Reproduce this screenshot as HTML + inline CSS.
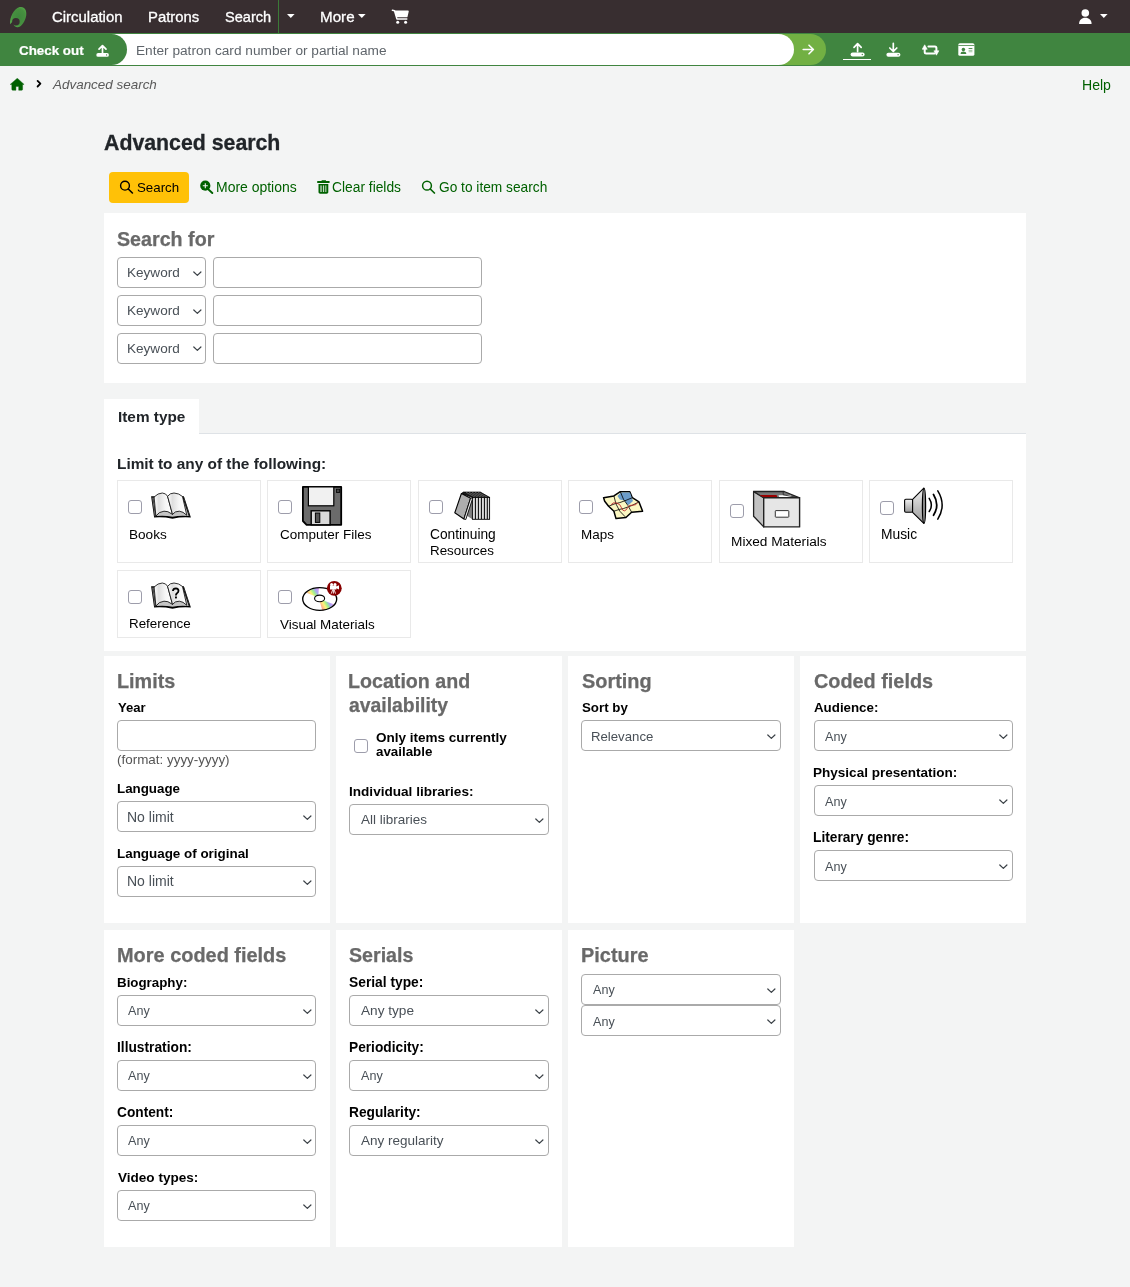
<!DOCTYPE html>
<html><head><meta charset="utf-8"><title>Advanced search</title>
<style>
html,body{margin:0;padding:0}
body{width:1130px;height:1287px;overflow:hidden;position:relative;background:#f3f4f4;font-family:"Liberation Sans",sans-serif;}
.t{position:absolute;white-space:nowrap;will-change:transform}
.b{position:absolute;display:block}
</style></head><body>
<div class="b" style="left:0px;top:0px;width:1130px;height:33px;background:#382e30"></div>
<svg class="b" style="left:0px;top:0px" width="34" height="33" viewBox="0 0 34 33"><defs><radialGradient id="lg" cx="0.55" cy="0.5" r="0.6"><stop offset="0" stop-color="#3f873d"/><stop offset="0.65" stop-color="#46903f"/><stop offset="1" stop-color="#5aae4c"/></radialGradient></defs>
<path d="M10.1 24.2 C9.6 17.5 13.6 8.8 19.6 7.1 C24.3 5.9 27 10.2 26.2 15.4 C25.3 21.4 21.4 27.1 17.6 27.2 C15.9 27.3 14.5 26.4 13.9 25.3 L12.6 21.5 Z" fill="url(#lg)"/>
<circle cx="15.9" cy="21.8" r="3.75" fill="#382e30"/></svg>
<div class="t" style="left:52.30px;top:7px;font-size:14.932px;line-height:19px;font-weight:400;color:#fff;font-style:normal;-webkit-text-stroke:0.3px #fff">Circulation</div>
<div class="t" style="left:148.04px;top:8px;font-size:14.864px;line-height:19px;font-weight:400;color:#fff;font-style:normal;-webkit-text-stroke:0.3px #fff">Patrons</div>
<div class="t" style="left:225.04px;top:8px;font-size:14.573px;line-height:18px;font-weight:400;color:#fff;font-style:normal;-webkit-text-stroke:0.3px #fff">Search</div>
<div class="b" style="left:278px;top:0px;width:1px;height:33px;background:#3b7a37"></div>
<svg class="b" style="left:287px;top:14px" width="8" height="5" viewBox="0 0 8 5"><path d="M0 0 L7.6 0 L3.8 4.1 Z" fill="#fff"/></svg>
<div class="t" style="left:319.81px;top:7px;font-size:15.188px;line-height:19px;font-weight:400;color:#fff;font-style:normal;-webkit-text-stroke:0.3px #fff">More</div>
<svg class="b" style="left:358.3px;top:14px" width="8" height="5" viewBox="0 0 8 5"><path d="M0 0 L7.6 0 L3.8 4.1 Z" fill="#fff"/></svg>
<svg class="b" style="left:390px;top:8px" width="20" height="16" viewBox="0 0 20 16"><path d="M5.4 3.3 L18 3.3 L16.8 8.6 L7 8.6 Z" fill="#fff" stroke="#fff" stroke-width="1.5" stroke-linejoin="round"/><path d="M2.4 2.3 L4.5 2.7 L6.9 10.9 L16.8 10.9" fill="none" stroke="#fff" stroke-width="1.5" stroke-linecap="round" stroke-linejoin="round"/><circle cx="7.7" cy="14.3" r="1.5" fill="#fff"/><circle cx="15.6" cy="14.3" r="1.5" fill="#fff"/></svg>
<svg class="b" style="left:1078px;top:8px" width="15" height="17" viewBox="0 0 15 17"><circle cx="7.3" cy="5" r="3.8" fill="#fff"/><path d="M1.1 15.9 C1.1 12 3.6 9.7 7.3 9.7 C11 9.7 13.6 12 13.6 15.9 Z" fill="#fff"/></svg>
<svg class="b" style="left:1099.5px;top:14px" width="8" height="5" viewBox="0 0 8 5"><path d="M0 0 L7.6 0 L3.8 4.1 Z" fill="#fff"/></svg>
<div class="b" style="left:0px;top:33px;width:1130px;height:33px;background:#408540"></div>
<div class="b" style="left:760px;top:34px;width:66px;height:31px;background:#72b043;border-radius:0 15.5px 15.5px 0"></div>
<div class="b" style="left:105px;top:34px;width:689px;height:31px;background:#fff;border-radius:0 15.5px 15.5px 0"></div>
<div class="b" style="left:0px;top:34px;width:127px;height:31px;background:#408540;border-radius:0 15.5px 15.5px 0"></div>
<div class="t" style="left:19.38px;top:42px;font-size:13.381px;line-height:17px;font-weight:700;color:#fff;font-style:normal;-webkit-text-stroke:0.2px #fff">Check out</div>
<svg class="b" style="left:96px;top:44px" width="13" height="13" viewBox="0 0 13 13"><path d="M6.5 9.6 L6.5 1.8 M3 5.2 L6.5 1.6 L10 5.2" fill="none" stroke="#fff" stroke-width="1.7" stroke-linecap="round" stroke-linejoin="round"/><rect x="0.3" y="9" width="12.6" height="3.8" rx="1.9" fill="#fff"/><circle cx="10.6" cy="10.9" r="0.6" fill="#408540"/></svg>
<div class="t" style="left:136.13px;top:42px;font-size:13.663px;line-height:17px;font-weight:400;color:#5f656b;font-style:normal;">Enter patron card number or partial name</div>
<svg class="b" style="left:802.3px;top:44.4px" width="13" height="11" viewBox="0 0 13 11"><path d="M1.2 5.5 L11.4 5.5 M7 1.2 L11.4 5.5 L7 9.8" fill="none" stroke="#fff" stroke-width="1.6" stroke-linecap="round" stroke-linejoin="round"/></svg>
<svg class="b" style="left:849.5px;top:42px" width="16" height="15" viewBox="0 0 16 15"><path d="M7.6 9.6 L7.6 1.8 M4 5.3 L7.6 1.6 L11.2 5.3" fill="none" stroke="#fff" stroke-width="1.7" stroke-linecap="round" stroke-linejoin="round"/><rect x="0.6" y="10.5" width="14" height="4" rx="2" fill="#fff"/><circle cx="12.3" cy="12.5" r="0.65" fill="#408540"/></svg>
<div class="b" style="left:843.2px;top:58.6px;width:28px;height:1.9px;background:#fff"></div>
<svg class="b" style="left:885.8px;top:42px" width="16" height="15" viewBox="0 0 16 15"><path d="M7.3 1.3 L7.3 9.3 M3.8 6 L7.3 9.5 L10.8 6" fill="none" stroke="#fff" stroke-width="1.7" stroke-linecap="round" stroke-linejoin="round"/><rect x="0.4" y="10.7" width="14" height="4" rx="2" fill="#fff"/><circle cx="12.1" cy="12.7" r="0.65" fill="#408540"/></svg>
<svg class="b" style="left:921.5px;top:44px" width="18" height="12" viewBox="0 0 18 12"><path d="M2.7 4.5 L2.7 8.1 Q2.7 9.6 4.2 9.6 L12.4 9.6 M6.4 2.6 L12.9 2.6 Q14.4 2.6 14.4 4.1 L14.4 7.5" fill="none" stroke="#fff" stroke-width="2" stroke-linecap="round"/><path d="M0.2 5.3 L2.7 0.8 L5.2 5.3 Z M11.9 6.8 L14.4 11.2 L16.9 6.8 Z" fill="#fff" stroke="#fff" stroke-width="0.6" stroke-linejoin="round"/></svg>
<svg class="b" style="left:957.5px;top:43px" width="17" height="13" viewBox="0 0 17 13"><rect x="0.3" y="0.2" width="16.1" height="12.6" rx="1.6" fill="#fff"/><rect x="0.3" y="2.1" width="16.1" height="0.8" fill="#408540"/><circle cx="5.4" cy="6.5" r="1.75" fill="#408540"/><path d="M2.6 11 C2.6 9.4 3.8 8.6 5.4 8.6 C7 8.6 8.3 9.4 8.3 11 Z" fill="#408540"/><rect x="10.6" y="5" width="3.8" height="0.9" fill="#408540"/><rect x="10.6" y="6.9" width="3.8" height="0.8" fill="#8bb88b"/><rect x="10.6" y="8.4" width="3.8" height="0.8" fill="#8bb88b"/></svg>
<svg class="b" style="left:10px;top:78px" width="15" height="13" viewBox="0 0 15 13"><path d="M7.3 0.2 L0.2 6.4 L1.8 6.4 L1.8 11.3 Q1.8 12.3 2.8 12.3 L5.9 12.3 L5.9 8.4 L8.7 8.4 L8.7 12.3 L11.6 12.3 Q12.6 12.3 12.6 11.3 L12.6 6.4 L14.1 6.4 Z" fill="#006100" stroke="#006100" stroke-width="0.4" stroke-linejoin="round"/></svg>
<svg class="b" style="left:36px;top:79px" width="6" height="10" viewBox="0 0 6 10"><path d="M1.6 1.9 L4.4 4.7 L1.6 7.5" fill="none" stroke="#000" stroke-width="1.8" stroke-linecap="round" stroke-linejoin="round"/></svg>
<div class="t" style="left:52.84px;top:76px;font-size:13.447px;line-height:17px;font-weight:400;color:#595959;font-style:italic;">Advanced search</div>
<div class="t" style="left:1081.60px;top:76px;font-size:14.087px;line-height:18px;font-weight:400;color:#006100;font-style:normal;">Help</div>
<div class="t" style="left:104.07px;top:130px;font-size:21.307px;line-height:27px;font-weight:700;color:#212529;font-style:normal;-webkit-text-stroke:0.3px #212529">Advanced search</div>
<div class="b" style="left:109px;top:172px;width:80px;height:31px;background:#ffc107;border-radius:4px"></div>
<svg class="b" style="left:119px;top:179px" width="15" height="15" viewBox="0 0 15 15"><circle cx="6" cy="6.7" r="4.4" fill="none" stroke="#000" stroke-width="1.4"/><path d="M9.3 10 L13.4 14" stroke="#000" stroke-width="1.6" stroke-linecap="round"/></svg>
<div class="t" style="left:136.58px;top:179px;font-size:13.307px;line-height:17px;font-weight:400;color:#000;font-style:normal;">Search</div>
<svg class="b" style="left:199px;top:179px" width="15" height="15" viewBox="0 0 15 15"><circle cx="6.3" cy="6.7" r="5.1" fill="#006100"/><path d="M9.5 10.5 L13.3 14" stroke="#006100" stroke-width="1.9" stroke-linecap="round"/><path d="M6.3 4.2 L6.3 9.2 M3.8 6.7 L8.8 6.7" stroke="#f3f4f4" stroke-width="1.1"/></svg>
<div class="t" style="left:215.61px;top:179px;font-size:13.982px;line-height:17px;font-weight:400;color:#006100;font-style:normal;">More options</div>
<svg class="b" style="left:317px;top:179px" width="13" height="16" viewBox="0 0 13 16"><path d="M0.9 3 L11.9 3" stroke="#006100" stroke-width="1.8" stroke-linecap="round"/><path d="M4.0 3 L4.8 1.2 L8.8 1.2 L9.6 3 Z" fill="#006100"/><path d="M1.5 5 L11.3 5 L11.3 13 C11.3 14 10.6 14.7 9.6 14.7 L3.2 14.7 C2.2 14.7 1.5 14 1.5 13 Z" fill="#006100"/><rect x="3.1" y="6.4" width="1.9" height="6.6" fill="#8ab58a"/><rect x="5.9" y="6.4" width="1.0" height="6.6" fill="#d8e6d8"/><rect x="7.8" y="6.4" width="1.7" height="6.6" fill="#8ab58a"/></svg>
<div class="t" style="left:332.35px;top:179px;font-size:13.810px;line-height:17px;font-weight:400;color:#006100;font-style:normal;">Clear fields</div>
<svg class="b" style="left:421px;top:179px" width="15" height="15" viewBox="0 0 15 15"><circle cx="6" cy="6.7" r="4.4" fill="none" stroke="#006100" stroke-width="1.5"/><path d="M9.3 10 L13.4 14" stroke="#006100" stroke-width="1.7" stroke-linecap="round"/></svg>
<div class="t" style="left:438.76px;top:179px;font-size:13.724px;line-height:17px;font-weight:400;color:#006100;font-style:normal;">Go to item search</div>
<div class="b" style="left:104px;top:213px;width:922px;height:170px;background:#fff"></div>
<div class="t" style="left:117.49px;top:227px;font-size:19.689px;line-height:25px;font-weight:700;color:#696969;font-style:normal;-webkit-text-stroke:0.25px #696969">Search for</div>
<div class="b" style="left:117px;top:257px;width:89.4px;height:31px;background:#fff;border:1px solid #aaaaaa;border-radius:4px;box-sizing:border-box"></div>
<div class="t" style="left:127.14px;top:264px;font-size:13.577px;line-height:17px;font-weight:400;color:#495057;font-style:normal;">Keyword</div>
<svg class="b" style="left:192.8px;top:270.7px" width="9" height="6" viewBox="0 0 9 6"><path d="M0.8 1 L4.35 4.4 L7.9 1" fill="none" stroke="#3a4046" stroke-width="1.2" stroke-linecap="round" stroke-linejoin="round"/></svg>
<div class="b" style="left:213px;top:257px;width:269px;height:31px;background:#fff;border:1px solid #aaaaaa;border-radius:4px;box-sizing:border-box"></div>
<div class="b" style="left:117px;top:295px;width:89.4px;height:31px;background:#fff;border:1px solid #aaaaaa;border-radius:4px;box-sizing:border-box"></div>
<div class="t" style="left:127.14px;top:302px;font-size:13.577px;line-height:17px;font-weight:400;color:#495057;font-style:normal;">Keyword</div>
<svg class="b" style="left:192.8px;top:308.7px" width="9" height="6" viewBox="0 0 9 6"><path d="M0.8 1 L4.35 4.4 L7.9 1" fill="none" stroke="#3a4046" stroke-width="1.2" stroke-linecap="round" stroke-linejoin="round"/></svg>
<div class="b" style="left:213px;top:295px;width:269px;height:31px;background:#fff;border:1px solid #aaaaaa;border-radius:4px;box-sizing:border-box"></div>
<div class="b" style="left:117px;top:332.6px;width:89.4px;height:31px;background:#fff;border:1px solid #aaaaaa;border-radius:4px;box-sizing:border-box"></div>
<div class="t" style="left:127.14px;top:340px;font-size:13.577px;line-height:17px;font-weight:400;color:#495057;font-style:normal;">Keyword</div>
<svg class="b" style="left:192.8px;top:346.3px" width="9" height="6" viewBox="0 0 9 6"><path d="M0.8 1 L4.35 4.4 L7.9 1" fill="none" stroke="#3a4046" stroke-width="1.2" stroke-linecap="round" stroke-linejoin="round"/></svg>
<div class="b" style="left:213px;top:332.6px;width:269px;height:31px;background:#fff;border:1px solid #aaaaaa;border-radius:4px;box-sizing:border-box"></div>
<div class="b" style="left:104px;top:399px;width:95px;height:35px;background:#fff"></div>
<div class="b" style="left:104px;top:434px;width:922px;height:217px;background:#fff"></div>
<div class="b" style="left:199px;top:433px;width:827px;height:1px;background:#dee2e6"></div>
<div class="t" style="left:117.54px;top:407px;font-size:15.339px;line-height:19px;font-weight:700;color:#212529;font-style:normal;">Item type</div>
<div class="t" style="left:116.74px;top:454px;font-size:15.397px;line-height:19px;font-weight:700;color:#212529;font-style:normal;">Limit to any of the following:</div>
<div class="b" style="left:117px;top:480px;width:144px;height:83px;background:#fff;border:1px solid #e9e9e9;box-sizing:border-box"></div>
<div class="b" style="left:267px;top:480px;width:144px;height:83px;background:#fff;border:1px solid #e9e9e9;box-sizing:border-box"></div>
<div class="b" style="left:418px;top:480px;width:144px;height:83px;background:#fff;border:1px solid #e9e9e9;box-sizing:border-box"></div>
<div class="b" style="left:568px;top:480px;width:144px;height:83px;background:#fff;border:1px solid #e9e9e9;box-sizing:border-box"></div>
<div class="b" style="left:719px;top:480px;width:144px;height:83px;background:#fff;border:1px solid #e9e9e9;box-sizing:border-box"></div>
<div class="b" style="left:869px;top:480px;width:144px;height:83px;background:#fff;border:1px solid #e9e9e9;box-sizing:border-box"></div>
<div class="b" style="left:117px;top:570px;width:144px;height:68px;background:#fff;border:1px solid #e9e9e9;box-sizing:border-box"></div>
<div class="b" style="left:267px;top:570px;width:144px;height:68px;background:#fff;border:1px solid #e9e9e9;box-sizing:border-box"></div>
<svg class="b" style="left:145px;top:485px" width="55" height="40" viewBox="0 0 55 40"><defs><linearGradient id="pg145485" x1="0" x2="1"><stop offset="0" stop-color="#fff"/><stop offset="0.25" stop-color="#dedede"/><stop offset="0.6" stop-color="#f6f6f6"/><stop offset="1" stop-color="#fff"/></linearGradient></defs>
<path d="M6.1 11.2 L9.1 32.5 Q18 31.6 27.5 33.7 Q37 31.6 45.9 32.5 L38.9 11.2 Z" fill="#000"/>
<path d="M8.4 12.4 L10.9 31.1 Q19 30 27.5 31.8 Q36 30 43.7 31.1 L37.6 12.4 Z" fill="#c4c4c4"/>
<path d="M7.6 12.6 L10.1 31.4" stroke="#cfcfcf" stroke-width="0.5"/>
<path d="M38.6 12.4 L44.6 31.2" stroke="#444" stroke-width="1.0" stroke-dasharray="0.8 0.6"/>
<path d="M9.1 12 Q13 8 17.3 8 Q21 8.2 22.6 11.3 L27.5 29.4 Q22.5 25.6 19 26.2 Q14 26.6 10.9 31 Z" fill="url(#pg145485)" stroke="#000" stroke-width="0.8"/>
<path d="M22.6 11.3 Q25 8 29 8 Q34 8.3 37.5 11.5 L41.8 30.3 Q38 26.4 34.3 26.2 Q30 26 27.5 29.4 Z" fill="url(#pg145485)" stroke="#000" stroke-width="0.8"/>
</svg>
<svg class="b" style="left:270px;top:480px" width="80" height="50" viewBox="0 0 80 50"><path d="M32.9 6.9 L71.2 6.9 L71.2 44.8 L36.6 44.8 L32.9 41 Z" fill="#6b6b6b" stroke="#000" stroke-width="1.8" stroke-linejoin="round"/>
<rect x="38.4" y="6.9" width="25.4" height="18.9" fill="#f1f1f1" stroke="#000" stroke-width="1.2"/>
<rect x="41.2" y="30.8" width="18.9" height="14" fill="#dadada" stroke="#000" stroke-width="1.4"/>
<rect x="45.4" y="33" width="4.4" height="9.4" fill="#555" stroke="#000" stroke-width="1.0"/>
<rect x="66.5" y="9.2" width="3.2" height="3.3" fill="#444" stroke="#000" stroke-width="0.8"/></svg>
<svg class="b" style="left:420px;top:480px" width="80" height="50" viewBox="0 0 80 50"><path d="M41.6 13.4 L43.4 12.1 L60.3 12.1 L69.6 17.4 L52.4 17.4 Z" fill="#1a1a1a" stroke="#000" stroke-width="0.8" stroke-linejoin="round"/>
<path d="M46 12.3 L55.4 17.3 M49 12.3 L58.4 17.3 M52 12.3 L61.4 17.3 M55 12.3 L64.4 17.3 M58 12.3 L67.4 17.3" stroke="#8a8a8a" stroke-width="0.6"/>
<path d="M50.6 18.2 L52.4 17.4 L52.4 39.3 L46.6 35.4 Z" fill="#808080"/>
<rect x="52.4" y="17.4" width="17.2" height="21.9" fill="#dcdcdc" stroke="#000" stroke-width="0.9"/>
<path d="M55.4 17.6 L55.4 39.1 M58.4 17.6 L58.4 39.1 M61.4 17.6 L61.4 39.1 M64.4 17.6 L64.4 39.1 M67.3 17.6 L67.3 39.1" stroke="#000" stroke-width="1.0"/>
<path d="M41.4 13.5 L50.6 18.2 L43.9 39 L34.8 32.8 Z" fill="#adadad" stroke="#000" stroke-width="1.1" stroke-linejoin="round"/>
<path d="M50.6 18.2 L52.8 18 L45.8 39.5 L43.9 39 Z" fill="#f0f0f0" stroke="#000" stroke-width="0.9" stroke-linejoin="round"/></svg>
<svg class="b" style="left:570px;top:480px" width="80" height="50" viewBox="0 0 80 50"><path d="M33.6 17.7 L43.9 15.9 L50.3 11.7 L59.8 11.7 L62.3 17.7 L69 21.9 L72.6 31.2 L61.6 32.2 L55.9 37.5 L46 38.6 L43.9 31.2 L38.6 26.2 L34.7 21.2 Z" fill="#fbf7c2" stroke="#000" stroke-width="1.5" stroke-linejoin="round"/>
<path d="M47.5 16 Q50 13 51.8 12.6 L60 12.6 L61.8 17.8 L63 21 Q60 24 58.3 25 Q55.5 23 54.5 20 Q52.8 20.6 49.8 19.5 Z" fill="#6b9cca"/>
<path d="M43.9 15.9 L46 24 L49.8 31.2 L55.9 37.5 M50.3 11.7 L53.6 19.5 L58 25.6 L61.6 32.2 M38.6 26.2 Q46 23 49.8 22.6 Q56 20.5 62.3 17.7 M43.9 31.2 Q50 29 53.6 28.5 Q62 26 69 21.9" fill="none" stroke="#000" stroke-width="0.8"/>
<path d="M41 24.8 Q43 22 46.5 23 Q50.5 24 51.5 27.8 Q52.5 31 54.5 30.8 Q57 30 57.5 27.5 Q59 24.5 62.5 25.2 Q66.5 25.5 67.5 22.5" fill="none" stroke="#c0282a" stroke-width="0.9"/></svg>
<svg class="b" style="left:745px;top:484px" width="60" height="46" viewBox="0 0 60 46"><path d="M8.6 7.5 L18.7 13.8 L18.7 42.9 L8.6 32.2 Z" fill="#c2c2c2" stroke="#222" stroke-width="1.3" stroke-linejoin="round"/>
<path d="M8.6 7.5 L39.1 7.5 L54.6 13.8 L18.7 13.8 Z" fill="#777" stroke="#222" stroke-width="1.3" stroke-linejoin="round"/>
<path d="M14.5 10.9 L31.5 10.9 L32.6 13.6 L18.9 13.6 Z" fill="#9a0000"/>
<path d="M33.5 11.3 L45.5 11.3 L48.3 13.6 L34.2 13.6 Z" fill="#fff"/>
<path d="M38.2 7.5 L38.2 10.8 L52.5 13.6" fill="none" stroke="#222" stroke-width="0.8"/>
<rect x="18.7" y="13.8" width="35.9" height="29.1" fill="#e6e6e6" stroke="#222" stroke-width="1.4" stroke-linejoin="round"/>
<rect x="30.3" y="26.6" width="13.5" height="6.6" fill="#fff" stroke="#333" stroke-width="1.0" rx="0.6"/></svg>
<svg class="b" style="left:895px;top:482px" width="60" height="46" viewBox="0 0 60 46"><defs><linearGradient id="spk" x1="0" y1="0" x2="0" y2="1"><stop offset="0" stop-color="#f2f2f2"/><stop offset="1" stop-color="#999"/></linearGradient></defs>
<rect x="9.6" y="17.3" width="8" height="13" rx="1.2" fill="url(#spk)" stroke="#000" stroke-width="1.1"/>
<path d="M17.6 17.3 L28.8 6.2 L28.8 41.4 L17.6 30.3 Z" fill="url(#spk)" stroke="#000" stroke-width="1.1" stroke-linejoin="round"/>
<ellipse cx="29" cy="23.8" rx="1.6" ry="17.4" fill="#888" stroke="#000" stroke-width="1.2"/>
<path d="M34.2 16.3 Q38.5 23 34.2 29.5" fill="none" stroke="#000" stroke-width="1.5" stroke-linecap="round"/>
<path d="M38.5 12.5 Q45 23 38.5 33.3" fill="none" stroke="#000" stroke-width="1.75" stroke-linecap="round"/>
<path d="M42.8 8.8 Q51.5 23 42.8 37.2" fill="none" stroke="#000" stroke-width="1.5" stroke-linecap="round"/></svg>
<svg class="b" style="left:145px;top:575px" width="55" height="40" viewBox="0 0 55 40"><defs><linearGradient id="pg145575" x1="0" x2="1"><stop offset="0" stop-color="#fff"/><stop offset="0.25" stop-color="#dedede"/><stop offset="0.6" stop-color="#f6f6f6"/><stop offset="1" stop-color="#fff"/></linearGradient></defs>
<path d="M6.1 11.2 L9.1 32.5 Q18 31.6 27.5 33.7 Q37 31.6 45.9 32.5 L38.9 11.2 Z" fill="#000"/>
<path d="M8.4 12.4 L10.9 31.1 Q19 30 27.5 31.8 Q36 30 43.7 31.1 L37.6 12.4 Z" fill="#c4c4c4"/>
<path d="M7.6 12.6 L10.1 31.4" stroke="#cfcfcf" stroke-width="0.5"/>
<path d="M38.6 12.4 L44.6 31.2" stroke="#444" stroke-width="1.0" stroke-dasharray="0.8 0.6"/>
<path d="M9.1 12 Q13 8 17.3 8 Q21 8.2 22.6 11.3 L27.5 29.4 Q22.5 25.6 19 26.2 Q14 26.6 10.9 31 Z" fill="url(#pg145575)" stroke="#000" stroke-width="0.8"/>
<path d="M22.6 11.3 Q25 8 29 8 Q34 8.3 37.5 11.5 L41.8 30.3 Q38 26.4 34.3 26.2 Q30 26 27.5 29.4 Z" fill="url(#pg145575)" stroke="#000" stroke-width="0.8"/>
<path d="M27.9 16 Q28.2 13.4 30.9 13.4 Q33.5 13.5 33.5 15.8 Q33.5 17.3 32 18.2 Q30.9 19 30.9 20.6" fill="none" stroke="#000" stroke-width="1.8"/><rect x="30" y="21.5" width="1.9" height="1.9" fill="#000"/></svg>
<svg class="b" style="left:295px;top:575px" width="55" height="40" viewBox="0 0 55 40"><defs><linearGradient id="rb1" gradientUnits="userSpaceOnUse" x1="13" y1="20" x2="23.5" y2="13"><stop offset="0" stop-color="#ffa98f"/><stop offset="0.28" stop-color="#fff27a"/><stop offset="0.5" stop-color="#9ff08e"/><stop offset="0.72" stop-color="#a9a4f5"/><stop offset="1" stop-color="#e39af2"/></linearGradient>
<linearGradient id="rb2" gradientUnits="userSpaceOnUse" x1="27" y1="33" x2="37.5" y2="27"><stop offset="0" stop-color="#ffa98f"/><stop offset="0.28" stop-color="#fff27a"/><stop offset="0.5" stop-color="#9ff08e"/><stop offset="0.72" stop-color="#a9a4f5"/><stop offset="1" stop-color="#e39af2"/></linearGradient></defs>
<ellipse cx="24.7" cy="24" rx="17" ry="11.4" fill="#fff"/>
<path d="M19.5 21 L11.5 17.8 Q15 14 23.9 12.7 L23.4 19.7 Z" fill="url(#rb1)"/>
<path d="M24.8 26.6 L27.3 35.4 Q34 34.5 38.8 29.2 L29.2 25.8 Z" fill="url(#rb2)"/>
<ellipse cx="24.7" cy="24" rx="17" ry="11.4" fill="none" stroke="#000" stroke-width="1.35"/>
<ellipse cx="24.6" cy="23.4" rx="5" ry="3.3" fill="#fff" stroke="#000" stroke-width="1.1"/>
<circle cx="39.3" cy="13.3" r="7.4" fill="#880000"/>
<circle cx="36.6" cy="9.6" r="1.5" fill="#fff"/><circle cx="40" cy="9.6" r="1.5" fill="#fff"/>
<path d="M35 10.4 L41.4 10.4 L41.4 11.6 L44 10.3 L44 14.6 L41.4 13.3 L41.4 14.5 L35 14.5 Z" fill="#fff"/>
<path d="M37.8 14.4 L36.3 18.6 M38.4 14.4 L38.4 18.6 M39 14.4 L40.5 18.6" stroke="#fff" stroke-width="0.9"/></svg>
<div class="b" style="left:128px;top:500.3px;width:14px;height:14px;background:#fff;border:1px solid #9d9dab;border-radius:3px;box-sizing:border-box"></div>
<div class="t" style="left:128.64px;top:526px;font-size:13.596px;line-height:17px;font-weight:400;color:#000;font-style:normal;">Books</div>
<div class="b" style="left:278.1px;top:500.3px;width:14px;height:14px;background:#fff;border:1px solid #9d9dab;border-radius:3px;box-sizing:border-box"></div>
<div class="t" style="left:279.57px;top:526px;font-size:13.519px;line-height:17px;font-weight:400;color:#000;font-style:normal;">Computer Files</div>
<div class="b" style="left:429px;top:500.3px;width:14px;height:14px;background:#fff;border:1px solid #9d9dab;border-radius:3px;box-sizing:border-box"></div>
<div class="t" style="left:430.15px;top:526px;font-size:13.766px;line-height:17px;font-weight:400;color:#000;font-style:normal;">Continuing</div>
<div class="t" style="left:429.75px;top:542px;font-size:13.382px;line-height:17px;font-weight:400;color:#000;font-style:normal;">Resources</div>
<div class="b" style="left:579px;top:500.3px;width:14px;height:14px;background:#fff;border:1px solid #9d9dab;border-radius:3px;box-sizing:border-box"></div>
<div class="t" style="left:580.65px;top:526px;font-size:13.442px;line-height:17px;font-weight:400;color:#000;font-style:normal;">Maps</div>
<div class="b" style="left:730px;top:504px;width:14px;height:14px;background:#fff;border:1px solid #9d9dab;border-radius:3px;box-sizing:border-box"></div>
<div class="t" style="left:730.63px;top:533px;font-size:13.667px;line-height:17px;font-weight:400;color:#000;font-style:normal;">Mixed Materials</div>
<div class="b" style="left:880px;top:500.5px;width:14px;height:14px;background:#fff;border:1px solid #9d9dab;border-radius:3px;box-sizing:border-box"></div>
<div class="t" style="left:881.12px;top:526px;font-size:13.823px;line-height:17px;font-weight:400;color:#000;font-style:normal;">Music</div>
<div class="b" style="left:128.3px;top:590.3px;width:14px;height:14px;background:#fff;border:1px solid #9d9dab;border-radius:3px;box-sizing:border-box"></div>
<div class="t" style="left:128.85px;top:615px;font-size:13.392px;line-height:17px;font-weight:400;color:#000;font-style:normal;">Reference</div>
<div class="b" style="left:278.3px;top:590.3px;width:14px;height:14px;background:#fff;border:1px solid #9d9dab;border-radius:3px;box-sizing:border-box"></div>
<div class="t" style="left:280.30px;top:616px;font-size:13.455px;line-height:17px;font-weight:400;color:#000;font-style:normal;">Visual Materials</div>
<div class="b" style="left:104px;top:656px;width:226px;height:267px;background:#fff"></div>
<div class="b" style="left:336px;top:656px;width:226px;height:267px;background:#fff"></div>
<div class="b" style="left:568px;top:656px;width:226px;height:267px;background:#fff"></div>
<div class="b" style="left:800px;top:656px;width:226px;height:267px;background:#fff"></div>
<div class="t" style="left:116.56px;top:669px;font-size:19.776px;line-height:25px;font-weight:700;color:#696969;font-style:normal;-webkit-text-stroke:0.25px #696969">Limits</div>
<div class="t" style="left:117.90px;top:700px;font-size:13.103px;line-height:16px;font-weight:700;color:#000;font-style:normal;">Year</div>
<div class="b" style="left:117px;top:720px;width:199.3px;height:31px;background:#fff;border:1px solid #aaaaaa;border-radius:4px;box-sizing:border-box"></div>
<div class="t" style="left:117.17px;top:751px;font-size:13.438px;line-height:17px;font-weight:400;color:#555;font-style:normal;">(format: yyyy-yyyy)</div>
<div class="t" style="left:116.97px;top:780px;font-size:13.354px;line-height:17px;font-weight:700;color:#000;font-style:normal;">Language</div>
<div class="b" style="left:117px;top:801.3px;width:199.3px;height:31px;background:#fff;border:1px solid #aaaaaa;border-radius:4px;box-sizing:border-box"></div>
<div class="t" style="left:127.10px;top:808px;font-size:14.024px;line-height:18px;font-weight:400;color:#495057;font-style:normal;">No limit</div>
<svg class="b" style="left:302.7px;top:815.0px" width="9" height="6" viewBox="0 0 9 6"><path d="M0.8 1 L4.35 4.4 L7.9 1" fill="none" stroke="#3a4046" stroke-width="1.2" stroke-linecap="round" stroke-linejoin="round"/></svg>
<div class="t" style="left:116.96px;top:845px;font-size:13.427px;line-height:17px;font-weight:700;color:#000;font-style:normal;">Language of original</div>
<div class="b" style="left:117px;top:866.1px;width:199.3px;height:31px;background:#fff;border:1px solid #aaaaaa;border-radius:4px;box-sizing:border-box"></div>
<div class="t" style="left:127.10px;top:872px;font-size:14.024px;line-height:18px;font-weight:400;color:#495057;font-style:normal;">No limit</div>
<svg class="b" style="left:302.7px;top:879.8000000000001px" width="9" height="6" viewBox="0 0 9 6"><path d="M0.8 1 L4.35 4.4 L7.9 1" fill="none" stroke="#3a4046" stroke-width="1.2" stroke-linecap="round" stroke-linejoin="round"/></svg>
<div class="t" style="left:348.47px;top:669px;font-size:19.653px;line-height:25px;font-weight:700;color:#696969;font-style:normal;-webkit-text-stroke:0.25px #696969">Location and</div>
<div class="t" style="left:349.40px;top:693px;font-size:19.375px;line-height:24px;font-weight:700;color:#696969;font-style:normal;-webkit-text-stroke:0.25px #696969">availability</div>
<div class="b" style="left:354px;top:739px;width:14px;height:14px;background:#fff;border:1px solid #9d9dab;border-radius:3px;box-sizing:border-box"></div>
<div class="t" style="left:376.18px;top:729px;font-size:13.520px;line-height:17px;font-weight:700;color:#000;font-style:normal;">Only items currently</div>
<div class="t" style="left:376.39px;top:743px;font-size:13.359px;line-height:17px;font-weight:700;color:#000;font-style:normal;">available</div>
<div class="t" style="left:348.85px;top:783px;font-size:13.598px;line-height:17px;font-weight:700;color:#000;font-style:normal;">Individual libraries:</div>
<div class="b" style="left:349.3px;top:804px;width:199.4px;height:31px;background:#fff;border:1px solid #aaaaaa;border-radius:4px;box-sizing:border-box"></div>
<div class="t" style="left:360.50px;top:811px;font-size:13.480px;line-height:17px;font-weight:400;color:#495057;font-style:normal;">All libraries</div>
<svg class="b" style="left:535.1px;top:817.7px" width="9" height="6" viewBox="0 0 9 6"><path d="M0.8 1 L4.35 4.4 L7.9 1" fill="none" stroke="#3a4046" stroke-width="1.2" stroke-linecap="round" stroke-linejoin="round"/></svg>
<div class="t" style="left:581.79px;top:669px;font-size:19.913px;line-height:25px;font-weight:700;color:#696969;font-style:normal;-webkit-text-stroke:0.25px #696969">Sorting</div>
<div class="t" style="left:581.89px;top:699px;font-size:13.302px;line-height:17px;font-weight:700;color:#000;font-style:normal;">Sort by</div>
<div class="b" style="left:581.3px;top:720.2px;width:199.4px;height:31px;background:#fff;border:1px solid #aaaaaa;border-radius:4px;box-sizing:border-box"></div>
<div class="t" style="left:591.47px;top:729px;font-size:13.199px;line-height:16px;font-weight:400;color:#495057;font-style:normal;">Relevance</div>
<svg class="b" style="left:767.0999999999999px;top:733.9000000000001px" width="9" height="6" viewBox="0 0 9 6"><path d="M0.8 1 L4.35 4.4 L7.9 1" fill="none" stroke="#3a4046" stroke-width="1.2" stroke-linecap="round" stroke-linejoin="round"/></svg>
<div class="t" style="left:813.68px;top:669px;font-size:19.853px;line-height:25px;font-weight:700;color:#696969;font-style:normal;-webkit-text-stroke:0.25px #696969">Coded fields</div>
<div class="t" style="left:814.09px;top:699px;font-size:13.325px;line-height:17px;font-weight:700;color:#000;font-style:normal;">Audience:</div>
<div class="b" style="left:813.6px;top:720.2px;width:199.2px;height:31px;background:#fff;border:1px solid #aaaaaa;border-radius:4px;box-sizing:border-box"></div>
<div class="t" style="left:824.80px;top:729px;font-size:12.593px;line-height:16px;font-weight:400;color:#495057;font-style:normal;">Any</div>
<svg class="b" style="left:999.1999999999999px;top:733.9000000000001px" width="9" height="6" viewBox="0 0 9 6"><path d="M0.8 1 L4.35 4.4 L7.9 1" fill="none" stroke="#3a4046" stroke-width="1.2" stroke-linecap="round" stroke-linejoin="round"/></svg>
<div class="t" style="left:813.35px;top:764px;font-size:13.549px;line-height:17px;font-weight:700;color:#000;font-style:normal;">Physical presentation:</div>
<div class="b" style="left:813.6px;top:785.3px;width:199.2px;height:31px;background:#fff;border:1px solid #aaaaaa;border-radius:4px;box-sizing:border-box"></div>
<div class="t" style="left:824.80px;top:794px;font-size:12.593px;line-height:16px;font-weight:400;color:#495057;font-style:normal;">Any</div>
<svg class="b" style="left:999.1999999999999px;top:799.0px" width="9" height="6" viewBox="0 0 9 6"><path d="M0.8 1 L4.35 4.4 L7.9 1" fill="none" stroke="#3a4046" stroke-width="1.2" stroke-linecap="round" stroke-linejoin="round"/></svg>
<div class="t" style="left:813.34px;top:829px;font-size:13.738px;line-height:17px;font-weight:700;color:#000;font-style:normal;">Literary genre:</div>
<div class="b" style="left:813.6px;top:850.3px;width:199.2px;height:31px;background:#fff;border:1px solid #aaaaaa;border-radius:4px;box-sizing:border-box"></div>
<div class="t" style="left:824.80px;top:859px;font-size:12.593px;line-height:16px;font-weight:400;color:#495057;font-style:normal;">Any</div>
<svg class="b" style="left:999.1999999999999px;top:864.0px" width="9" height="6" viewBox="0 0 9 6"><path d="M0.8 1 L4.35 4.4 L7.9 1" fill="none" stroke="#3a4046" stroke-width="1.2" stroke-linecap="round" stroke-linejoin="round"/></svg>
<div class="b" style="left:104px;top:930px;width:226px;height:317px;background:#fff"></div>
<div class="b" style="left:336px;top:930px;width:226px;height:317px;background:#fff"></div>
<div class="b" style="left:568px;top:930px;width:226px;height:317px;background:#fff"></div>
<div class="t" style="left:116.55px;top:943px;font-size:19.932px;line-height:25px;font-weight:700;color:#696969;font-style:normal;-webkit-text-stroke:0.25px #696969">More coded fields</div>
<div class="t" style="left:116.97px;top:974px;font-size:13.347px;line-height:17px;font-weight:700;color:#000;font-style:normal;">Biography:</div>
<div class="b" style="left:117.2px;top:994.8px;width:199.1px;height:31px;background:#fff;border:1px solid #aaaaaa;border-radius:4px;box-sizing:border-box"></div>
<div class="t" style="left:128.40px;top:1003px;font-size:12.593px;line-height:16px;font-weight:400;color:#495057;font-style:normal;">Any</div>
<svg class="b" style="left:302.7px;top:1008.5px" width="9" height="6" viewBox="0 0 9 6"><path d="M0.8 1 L4.35 4.4 L7.9 1" fill="none" stroke="#3a4046" stroke-width="1.2" stroke-linecap="round" stroke-linejoin="round"/></svg>
<div class="t" style="left:116.94px;top:1039px;font-size:13.758px;line-height:17px;font-weight:700;color:#000;font-style:normal;">Illustration:</div>
<div class="b" style="left:117.2px;top:1059.8px;width:199.1px;height:31px;background:#fff;border:1px solid #aaaaaa;border-radius:4px;box-sizing:border-box"></div>
<div class="t" style="left:128.40px;top:1068px;font-size:12.593px;line-height:16px;font-weight:400;color:#495057;font-style:normal;">Any</div>
<svg class="b" style="left:302.7px;top:1073.5px" width="9" height="6" viewBox="0 0 9 6"><path d="M0.8 1 L4.35 4.4 L7.9 1" fill="none" stroke="#3a4046" stroke-width="1.2" stroke-linecap="round" stroke-linejoin="round"/></svg>
<div class="t" style="left:117.37px;top:1104px;font-size:13.715px;line-height:17px;font-weight:700;color:#000;font-style:normal;">Content:</div>
<div class="b" style="left:117.2px;top:1124.8px;width:199.1px;height:31px;background:#fff;border:1px solid #aaaaaa;border-radius:4px;box-sizing:border-box"></div>
<div class="t" style="left:128.40px;top:1133px;font-size:12.593px;line-height:16px;font-weight:400;color:#495057;font-style:normal;">Any</div>
<svg class="b" style="left:302.7px;top:1138.5px" width="9" height="6" viewBox="0 0 9 6"><path d="M0.8 1 L4.35 4.4 L7.9 1" fill="none" stroke="#3a4046" stroke-width="1.2" stroke-linecap="round" stroke-linejoin="round"/></svg>
<div class="t" style="left:117.80px;top:1169px;font-size:13.568px;line-height:17px;font-weight:700;color:#000;font-style:normal;">Video types:</div>
<div class="b" style="left:117.2px;top:1189.8px;width:199.1px;height:31px;background:#fff;border:1px solid #aaaaaa;border-radius:4px;box-sizing:border-box"></div>
<div class="t" style="left:128.40px;top:1198px;font-size:12.593px;line-height:16px;font-weight:400;color:#495057;font-style:normal;">Any</div>
<svg class="b" style="left:302.7px;top:1203.5px" width="9" height="6" viewBox="0 0 9 6"><path d="M0.8 1 L4.35 4.4 L7.9 1" fill="none" stroke="#3a4046" stroke-width="1.2" stroke-linecap="round" stroke-linejoin="round"/></svg>
<div class="t" style="left:349.39px;top:943px;font-size:19.633px;line-height:25px;font-weight:700;color:#696969;font-style:normal;-webkit-text-stroke:0.25px #696969">Serials</div>
<div class="t" style="left:349.38px;top:974px;font-size:13.812px;line-height:17px;font-weight:700;color:#000;font-style:normal;">Serial type:</div>
<div class="b" style="left:349.3px;top:994.8px;width:199.4px;height:31px;background:#fff;border:1px solid #aaaaaa;border-radius:4px;box-sizing:border-box"></div>
<div class="t" style="left:360.50px;top:1002px;font-size:13.634px;line-height:17px;font-weight:400;color:#495057;font-style:normal;">Any type</div>
<svg class="b" style="left:535.1px;top:1008.5px" width="9" height="6" viewBox="0 0 9 6"><path d="M0.8 1 L4.35 4.4 L7.9 1" fill="none" stroke="#3a4046" stroke-width="1.2" stroke-linecap="round" stroke-linejoin="round"/></svg>
<div class="t" style="left:348.74px;top:1039px;font-size:13.735px;line-height:17px;font-weight:700;color:#000;font-style:normal;">Periodicity:</div>
<div class="b" style="left:349.3px;top:1059.8px;width:199.4px;height:31px;background:#fff;border:1px solid #aaaaaa;border-radius:4px;box-sizing:border-box"></div>
<div class="t" style="left:360.50px;top:1068px;font-size:12.593px;line-height:16px;font-weight:400;color:#495057;font-style:normal;">Any</div>
<svg class="b" style="left:535.1px;top:1073.5px" width="9" height="6" viewBox="0 0 9 6"><path d="M0.8 1 L4.35 4.4 L7.9 1" fill="none" stroke="#3a4046" stroke-width="1.2" stroke-linecap="round" stroke-linejoin="round"/></svg>
<div class="t" style="left:348.74px;top:1104px;font-size:13.727px;line-height:17px;font-weight:700;color:#000;font-style:normal;">Regularity:</div>
<div class="b" style="left:349.3px;top:1124.8px;width:199.4px;height:31px;background:#fff;border:1px solid #aaaaaa;border-radius:4px;box-sizing:border-box"></div>
<div class="t" style="left:360.50px;top:1132px;font-size:13.510px;line-height:17px;font-weight:400;color:#495057;font-style:normal;">Any regularity</div>
<svg class="b" style="left:535.1px;top:1138.5px" width="9" height="6" viewBox="0 0 9 6"><path d="M0.8 1 L4.35 4.4 L7.9 1" fill="none" stroke="#3a4046" stroke-width="1.2" stroke-linecap="round" stroke-linejoin="round"/></svg>
<div class="t" style="left:581.05px;top:943px;font-size:19.923px;line-height:25px;font-weight:700;color:#696969;font-style:normal;-webkit-text-stroke:0.25px #696969">Picture</div>
<div class="b" style="left:581.3px;top:973.8px;width:199.4px;height:31px;background:#fff;border:1px solid #aaaaaa;border-radius:4px;box-sizing:border-box"></div>
<div class="t" style="left:592.50px;top:982px;font-size:12.593px;line-height:16px;font-weight:400;color:#495057;font-style:normal;">Any</div>
<svg class="b" style="left:767.0999999999999px;top:987.5px" width="9" height="6" viewBox="0 0 9 6"><path d="M0.8 1 L4.35 4.4 L7.9 1" fill="none" stroke="#3a4046" stroke-width="1.2" stroke-linecap="round" stroke-linejoin="round"/></svg>
<div class="b" style="left:581.3px;top:1005.1px;width:199.4px;height:31px;background:#fff;border:1px solid #aaaaaa;border-radius:4px;box-sizing:border-box"></div>
<div class="t" style="left:592.50px;top:1014px;font-size:12.593px;line-height:16px;font-weight:400;color:#495057;font-style:normal;">Any</div>
<svg class="b" style="left:767.0999999999999px;top:1018.8000000000001px" width="9" height="6" viewBox="0 0 9 6"><path d="M0.8 1 L4.35 4.4 L7.9 1" fill="none" stroke="#3a4046" stroke-width="1.2" stroke-linecap="round" stroke-linejoin="round"/></svg>
</body></html>
